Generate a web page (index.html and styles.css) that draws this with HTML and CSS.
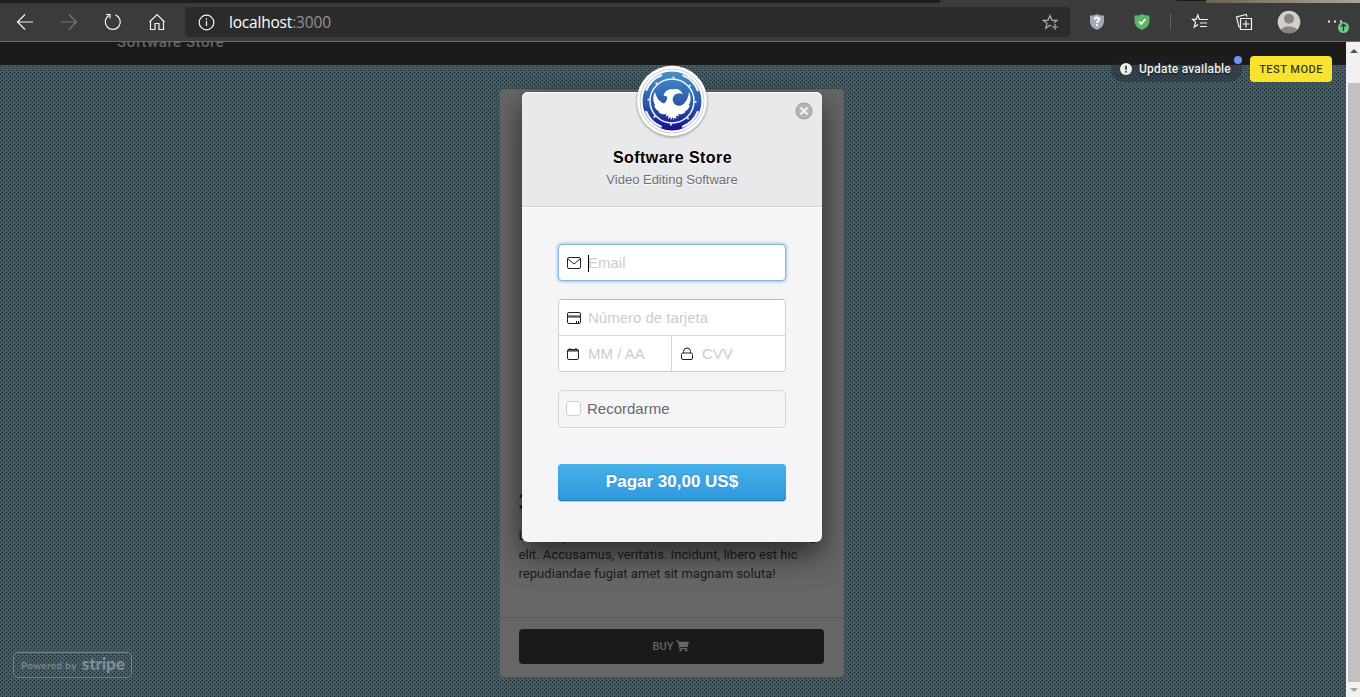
FILE: index.html
```html
<!DOCTYPE html>
<html lang="es">
<head>
<meta charset="utf-8">
<title>Software Store</title>
<link rel="stylesheet" href="styles.css">
</head>
<body>
<header class="browser">
  <div class="tabstrip"><span class="tab-dark"></span><span class="tab-mid"></span><span class="tab-edge"></span><span class="tab-photo"></span></div>
  <div class="toolbar">
    <nav class="nav-buttons">
      <svg width="18" height="18" viewBox="0 0 18 18"><path d="M17 9H1.500M9 1.500 1.500 9 9 16.500"/></svg>
      <svg class="muted" width="18" height="18" viewBox="0 0 18 18"><path d="M1 9h15.500M9 1.500 16.500 9 9 16.500"/></svg>
      <svg width="18" height="18" viewBox="0 0 18 18"><path d="M11.500 1.900A7.500 7.500 0 1 1 5 2.400M2 1.500h4v4"/></svg>
      <svg width="18" height="18" viewBox="0 0 18 18"><path d="M2.500 8v8.500H7v-6h4v6h4.500V8M1.500 9 9 1.500 16.500 9"/></svg>
    </nav>
    <div class="address">
      <svg width="17" height="17" viewBox="0 0 17 17"><circle cx="8.500" cy="8.500" r="7.300"/><path d="M8.500 7v5M8.500 4.300v1.500"/></svg>
      <span class="url">localhost<span class="port">:3000</span></span>
      <svg class="star-add" width="17" height="17" viewBox="0 0 17 17"><path d="M9.200 11.800 8 11.200 3.700 14.200 5 9.300 1 6.300h5L8 1.500l2 4.800h5l-3 2.800M13 10v6M10 13h6"/></svg>
    </div>
    <div class="tools">
      <svg class="shield" width="16" height="18" viewBox="0 0 16 18"><path class="fill-gray" d="M8 1c2 1.200 4 1.600 7 1.600V8c0 4.500-3 7.500-7 9-4-1.500-7-4.500-7-9V2.600C4 2.600 6 2.200 8 1Z"/><path class="mark" d="M5.700 6.500C5.900 3.700 10.300 3.800 10.200 6.400 10.100 8 8 8 8 10M8 11.300v1.700"/></svg>
      <svg class="shield" width="16" height="18" viewBox="0 0 16 18"><path class="fill-green" d="M8 1c2 1.200 4 1.600 7.500 1.600V8c0 4.500-3.500 7.500-7.500 9C4 15.500.5 12.500.5 8V2.600C4 2.600 6 2.200 8 1Z"/><path class="check" d="m5 8.500 2.300 2.400L11.500 6"/></svg>
      <i class="separator"></i>
      <svg class="favorites" width="18" height="18" viewBox="0 0 18 18"><path d="M9 6.300h-.7L6.800 2 5.200 6.300H1.500l3 2.800-1.300 5 4-2.700M9 6.500h8M9 10h7M9 13.500h7"/></svg>
      <svg class="collections" width="18" height="18" viewBox="0 0 18 18"><path d="M5 14H4L1.500 4l9.800-2.600.5 2.300M5.500 5.500h11v11h-11zM11 7.500v7M7.500 11h7"/></svg>
      <svg class="profile" width="24" height="24" viewBox="0 0 24 24"><defs><clipPath id="profile-clip"><circle cx="12" cy="12" r="11.300"/></clipPath></defs><g clip-path="url(#profile-clip)"><path class="light" d="M0 0h24v24H0z"/><circle class="person" cx="12" cy="8.700" r="5"/><path class="person" d="M3 24c-2-10 20-10 18 0z"/></g></svg>
      <svg class="more" width="24" height="24" viewBox="0 0 24 24"><path class="dots" d="M2 10.500h2v2H2zm6 0h2v2H8zm6 0h2v2h-2z"/><circle class="update" cx="17.500" cy="17.500" r="5.500"/><path class="arrow" d="M17.500 21v-7M15 16.500l2.500-2.500 2.500 2.500"/></svg>
    </div>
  </div>
</header>
<div class="viewport">
  <main class="page">
    <div class="navbar"><span class="brand">Software Store</span></div>
    <article class="card">
      <div class="card-body">
        <h2 class="price">30.00$</h2>
        <p class="description">Lorem ipsum dolor sit amet consectetur adipisicing<br>elit. Accusamus, veritatis. Incidunt, libero est hic<br>repudiandae fugiat amet sit magnam soluta!</p>
      </div>
      <div class="card-footer">
        <button class="buy">BUY <svg width="13" height="12" viewBox="0 0 14 12"><path d="M0 0h2.800l.4 1.500H14L12.500 7H4.600l.3 1.200h7.200l-.3 1.200H3.800L2 1.300H0z"/><circle cx="5" cy="10.700" r="1.300"/><circle cx="11" cy="10.700" r="1.300"/></svg></button>
      </div>
    </article>
    <div class="notices">
      <span class="update-pill"><svg width="12" height="12" viewBox="0 0 12 12"><circle cx="6" cy="6" r="6"/><path d="M6 2.700v4M6 8v1.400"/></svg>Update available<i class="badge"></i></span>
      <span class="test-mode">TEST MODE</span>
    </div>
    <section class="modal">
      <div class="modal-header">
        <svg class="logo" width="72" height="72" viewBox="0 0 72 72">
          <defs><linearGradient id="seal" x1="0" y1="0" x2="0" y2="1"><stop offset="0" stop-color="#4590c8"/><stop offset=".5" stop-color="#2f5dab"/><stop offset="1" stop-color="#14108c"/></linearGradient></defs>
          <circle class="rim" cx="36" cy="36" r="35.500"/><circle class="plate" cx="36" cy="36" r="35"/><circle class="hairline" cx="36" cy="36" r="32"/>
          <circle cx="36" cy="36" r="29.500" fill="url(#seal)"/>
          <g class="lines"><circle cx="36" cy="36" r="22" stroke-width="1.500"/><circle cx="36" cy="36" r="28" stroke-width="2.200" stroke-dasharray="23 20.980" stroke-dashoffset="-10.500"/><circle cx="36" cy="36" r="23.500" stroke-width="2" stroke-dasharray="1.800 16.650"/></g>
          <path class="bird" d="M19 27C20.500 33 23 36.500 28 38.500 30.500 36.500 31.500 34 31 31.500L27.500 30.500C29 26 32.500 23.500 37 24.500C41 23 45.500 25 47 29.500C45 28 42.500 28 40.500 28.800C37 30.500 35.800 34 37.500 37.500C39.500 41 44 42 47.500 39C50.500 36.500 52.500 32 53 27C55.500 32 55 37 52.500 40.500H54C53 43.500 51 45.500 48.500 47H49.500C47 49.500 44.500 49.500 42 49L43 51.500L40 50.500L40.500 54L38.500 52.500L37.800 55L36.500 52L35 55L34.300 52L32 54L32.500 50.500L29.500 51.500L30.500 49C27.500 49.500 25 49.500 22.500 47H23.500C21 45.500 19 43.500 18 40.500H19.500C17 37 16.500 32 19 27Z"/>
        </svg>
        <svg class="close" width="18" height="18" viewBox="0 0 18 18"><circle cx="9" cy="9" r="8"/><path d="m5.500 5.500 7 7M12.500 5.500l-7 7"/></svg>
        <h1>Software Store</h1>
        <p>Video Editing Software</p>
      </div>
      <form class="modal-body">
        <div class="field email"><svg width="16" height="14" viewBox="0 0 16 14"><rect x="1.500" y="1.500" width="13" height="11" rx="1.500"/><path d="m2 3 6 5 6-5"/></svg><i class="caret"></i><span>Email</span></div>
        <div class="card-fields">
          <div class="field number"><svg width="16" height="14" viewBox="0 0 16 14"><rect x="1.500" y="1.500" width="13" height="11" rx="1.500"/><path d="M1.500 5h13M1.500 6h13M10.500 10v2M12.500 10v2"/></svg><span>Número de tarjeta</span></div>
          <div class="field expiry"><svg width="14" height="14" viewBox="0 0 14 14"><rect x="1.500" y="2.500" width="11" height="10" rx="1.500"/><path d="M1.500 3h11M1.500 4h11M4 1v2M10 1v2"/></svg><span>MM / AA</span></div>
          <div class="field cvv"><svg width="14" height="14" viewBox="0 0 14 14"><rect x="1.500" y="6" width="11" height="6.500" rx="1.500"/><path d="M3.500 6V4.500a3.500 3.500 0 0 1 7 0V6"/></svg><span>CVV</span></div>
        </div>
        <label class="remember"><i class="checkbox"></i>Recordarme</label>
        <button class="pay" type="button">Pagar 30,00 US$</button>
      </form>
    </section>
    <div class="powered"><span>Powered by</span><strong>stripe</strong></div>
  </main>
  <aside class="scrollbar"><i class="up"></i><i class="thumb"></i><i class="down"></i></aside>
</div>
</body>
</html>
```
FILE: styles.css
```css
* { box-sizing: border-box; }
body { margin: 0; width: 1360px; height: 697px; overflow: hidden; display: flex; flex-direction: column; font-family: "Liberation Sans", Arial, sans-serif; }
svg { display: block; flex: none; }
h1, h2, p { margin: 0; }
button { border: 0; }

.browser { position: relative; z-index: 1; height: 42px; flex: none; background: #3b3b3b; border-bottom: 1px solid #6c6c6c; }
.tabstrip { height: 3px; display: flex; background: #3b3b3b; }
.tab-dark { width: 941px; background: #1e1e1e; border-radius: 0 0 3px 0; }
.tab-mid { width: 236px; }
.tab-edge { width: 29px; height: 1px; background: #191918; }
.tab-photo { flex: 1; background: linear-gradient(90deg, #66624f, #8b8776 50%, #aaa69b); }
.toolbar { height: 38px; display: flex; align-items: center; }
.toolbar svg { fill: none; stroke: #f2f2f2; stroke-width: 1.2; }
.nav-buttons { width: 185px; padding-left: 16px; display: flex; gap: 26px; }
.toolbar .muted { stroke: #777; }
.address { width: 885px; height: 30px; padding: 0 11px 0 13px; display: flex; align-items: center; background: #2b2b2b; border-radius: 4px; }
.url { flex: 1; margin-left: 14px; color: #fff; font: 15.5px "Open Sans", "Noto Sans", sans-serif; letter-spacing: -.2px; }
.port { color: #929292; letter-spacing: -.15px; }
.toolbar .star-add { stroke: #ababab; }
.tools { display: flex; align-items: center; padding-left: 19px; }
.toolbar .shield { margin-right: 29px; stroke: none; }
.toolbar .fill-gray { fill: #a5a8b6; }
.toolbar .fill-green { fill: #59b568; }
.toolbar .mark { stroke: #fff; stroke-width: 2; }
.toolbar .check { stroke: #fff; stroke-width: 1.8; }
.separator { width: 1px; height: 16px; margin-left: -9px; background: #626262; }
.favorites { margin-left: 20px; }
.collections { margin-left: 26px; }
.profile { margin-left: 24px; }
.toolbar .light { fill: #d2d0cd; stroke: none; }
.toolbar .person { fill: #888480; stroke: none; }
.more { margin-left: 25px; }
.toolbar .dots { fill: #e9e9e9; stroke: none; }
.toolbar .update { fill: #71c58d; stroke: none; }
.toolbar .arrow { stroke: #163c25; }

.viewport { display: flex; height: 655px; }
.page { position: relative; width: 1346px; height: 655px; background-color: #435b63; background-image: conic-gradient(at 1px 1px, transparent 75%, #13242b 0), conic-gradient(at 1px 1px, transparent 75%, #13242b 0); background-size: 4px 4px; background-position: 0 0, 2px 2px; }
.navbar { display: flow-root; height: 23px; padding-left: 117px; background: #1a1a18; }
.brand { display: block; margin-top: -10px; color: #666; font: 500 15px/20px Roboto, sans-serif; letter-spacing: .55px; }
.card { width: 344px; height: 588px; margin: 23.5px 0 0 499.5px; display: flex; flex-direction: column; justify-content: flex-end; background: #666; border-radius: 4px; color: #1a1a18; font-family: Roboto, sans-serif; }
.card-body { height: 129px; padding: 0 19px; }
.price { font: 700 24px/28px Roboto, sans-serif; margin-bottom: 10px; }
.description { font-size: 13px; line-height: 19px; letter-spacing: .04px; white-space: nowrap; }
.card-footer { height: 60px; padding: 11px 20px 13px 19px; border-top: 1px solid #595959; }
.buy { width: 305px; height: 35px; display: flex; align-items: center; justify-content: center; gap: 3px; background: #1a1a18; border-radius: 4px; color: #666; font: 500 11px Roboto, sans-serif; }
.buy svg { fill: #666; }

.notices { position: absolute; top: 14px; right: 14px; display: flex; align-items: center; gap: 8px; }
.update-pill { position: relative; display: flex; align-items: center; gap: 7px; width: 131px; height: 26px; padding-left: 9px; border-radius: 13px; background: rgba(30, 36, 46, .4); color: #f0f0f0; font: 500 12px Roboto, sans-serif; letter-spacing: .2px; white-space: nowrap; text-shadow: 0 1px 2px #111; }
.update-pill svg { fill: #ededed; stroke: #333; stroke-width: 1.7; }
.update-pill circle { stroke: none; }
.badge { position: absolute; right: 0; top: 0; width: 8px; height: 8px; border-radius: 50%; background: #6f93f5; }
.test-mode { width: 82px; height: 26px; border-radius: 4px; background: #f8e42e; color: #3d3a1b; text-align: center; font: 500 11px/27px Roboto, sans-serif; letter-spacing: .48px; }

.modal { position: absolute; left: 522px; top: 50px; width: 300px; height: 450px; background: #f5f5f7; border-radius: 6px; box-shadow: 0 12px 30px rgba(0, 0, 0, .6); }
.modal-header { height: 115px; padding-top: 56px; background: #e8e9eb; border-bottom: 1px solid #cfd0d2; border-radius: 6px 6px 0 0; box-shadow: 0 1px #fff, inset 0 1px #fff; text-align: center; }
.modal h1 { padding-left: 1px; font-size: 16px; line-height: 20px; letter-spacing: .45px; color: #000; text-shadow: 0 1px #fff; }
.modal-header p { margin-top: 4px; font-size: 13px; line-height: 16px; color: #6e6e78; text-shadow: 0 1px #fff; }
.logo { position: absolute; left: 114px; top: -27px; filter: drop-shadow(0 1px 1px rgba(0, 0, 0, .3)); }
.rim { fill: #bbb; }
.plate { fill: #fff; }
.hairline { fill: none; stroke: #cbcbcd; }
.lines { fill: none; stroke: #eef6fc; }
.bird { fill: #fff; }
.close { position: absolute; right: 9.5px; top: 9.5px; fill: #b5b5b6; stroke: #9c9c9d; }
.close path { stroke: #f1f1f1; stroke-width: 2.4; }
.modal-body { padding: 37px 36px 0; }
.field { display: flex; align-items: center; height: 36px; padding-left: 8px; background: #fff; color: #cccdcf; font-size: 15px; }
.field svg { fill: none; stroke: #222; stroke-width: 1; }
.field span { margin-left: 6px; white-space: nowrap; }
.email { position: relative; height: 37px; border: 1px solid #89b5e3; border-radius: 4px; padding-left: 7px; box-shadow: 0 0 3px 1px #a8c5ec; }
.caret { position: absolute; left: 29px; top: 10px; width: 1px; height: 17px; background: #000; }
.card-fields { height: 73px; margin-top: 18px; display: grid; grid-template: 36px 35px / 112px 114px; border: 1px solid #d0d0d2; border-top-color: #b8b8ba; border-radius: 4px; overflow: hidden; }
.number { grid-column: 1 / 3; padding-left: 7px; border-bottom: 1px solid #d6d6d8; }
.expiry, .cvv { height: 35px; padding-left: 7px; }
.expiry span { margin-left: 8px; }
.cvv { border-left: 1px solid #d6d6d8; padding-left: 8px; }
.cvv span { margin-left: 8px; }
.remember { display: flex; align-items: center; height: 38px; margin-top: 18px; padding: 0 0 1px 7px; gap: 6px; border: 1px solid #d6d6d9; border-radius: 4px; color: #66676d; font-size: 15px; text-shadow: 0 1px #fff; box-shadow: 0 1px #fff; }
.checkbox { width: 15px; height: 15px; background: #fff; border: 1px solid #cecfd1; border-radius: 3px; }
.pay { display: block; width: 228px; height: 37px; margin-top: 36px; padding: 0 0 2px; border-radius: 4px; background: linear-gradient(#45b1e8, #3097de); color: #fff; font: 700 17px "Liberation Sans", sans-serif; text-shadow: 0 -1px rgba(46, 86, 153, .3); box-shadow: inset 0 -1px #287bc4, 0 1px 1px #b8cbe0; }
.powered { position: absolute; left: 13px; top: 610px; width: 119px; height: 26px; display: flex; align-items: center; padding-left: 7px; border: 1px solid #75858a; border-radius: 5px; color: #7f8e93; font: 500 10px Lato, sans-serif; letter-spacing: .36px; }
.powered strong { margin: -3px 0 0 5px; font: 900 17px Lato, sans-serif; letter-spacing: -.1px; }

.scrollbar { width: 14px; height: 655px; display: flex; flex-direction: column; align-items: center; background: #f1f1f1; }
.scrollbar i { display: block; flex: none; margin-left: 2px; }
.up { width: 8px; height: 4px; margin-top: 7px; clip-path: polygon(50% 0, 100% 100%, 0 100%); background: #505050; }
.thumb { width: 12px; height: 599px; margin-top: 30px; background: #c1c1c1; }
.down { width: 8px; height: 4px; margin-top: 6px; clip-path: polygon(0 0, 100% 0, 50% 100%); background: #a3a3a3; }
```
